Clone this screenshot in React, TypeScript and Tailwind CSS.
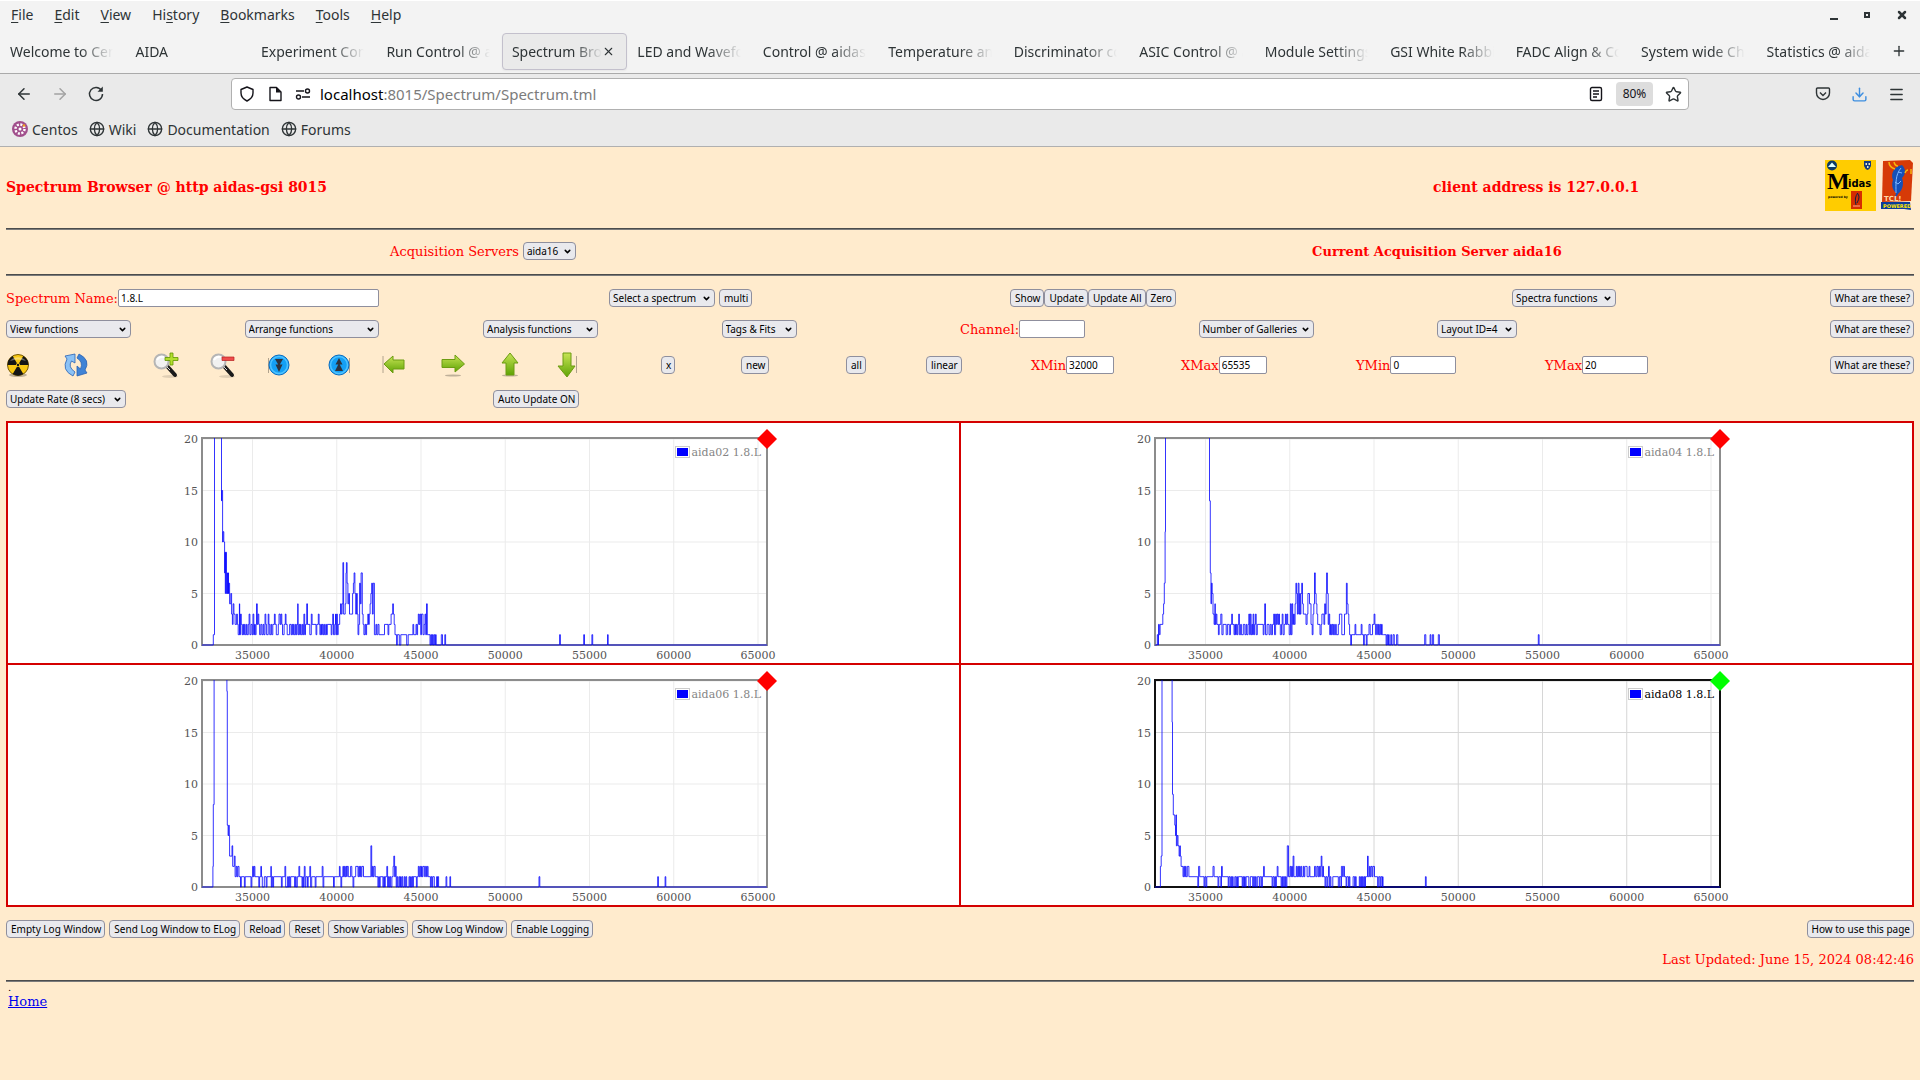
import type { ReactNode } from "react";
import { ArrowLeft, ArrowRight, ChevronDown, Download, Globe, Menu, Plus, Star, X } from "lucide-react";

type Spectrum = {
  name: string;
  active?: boolean;
  // first position of the axis, in the same units as the samples
  start: number;
  // "position:counts" pairs, each level lasts until the next position
  samples: string;
};

const menus = [
  ["", "F", "ile"],
  ["", "E", "dit"],
  ["", "V", "iew"],
  ["Hi", "s", "tory"],
  ["", "B", "ookmarks"],
  ["", "T", "ools"],
  ["", "H", "elp"],
];

const tabs = [
  "Welcome to CentOS",
  "AIDA",
  "Experiment Control",
  "Run Control @ aidas",
  "Spectrum Browser",
  "LED and Waveform",
  "Control @ aidas-gsi",
  "Temperature and status",
  "Discriminator control",
  "ASIC Control @ aidas",
  "Module Settings @",
  "GSI White Rabbit",
  "FADC Align & Control",
  "System wide Checks",
  "Statistics @ aidas-gsi",
];

const spectra: Spectrum[] = [
  {
    name: "aida02 1.8.L",
    start: 59,
    samples:
      "59:0 88:1 91:30 109:14 110:15 112:10 113:11 115:10 117:7 118:9 119:5 120:9 122:5 124:7 125:5 126:7 127:5 128:6 130:4 133:5 135:3 137:2 139:4 141:3 144:2 148:3 150:2 152:1 154:1 155:4 156:1 158:3 160:2 162:1 164:2 166:1 168:2 170:1 173:2 175:1 178:2 180:3 182:1 185:2 188:1 190:3 192:1 194:2 196:1 198:2 199:4 201:2 203:3 205:2 207:1 210:2 213:1 216:2 218:1 221:3 223:2 225:1 229:3 231:2 233:1 236:2 238:1 241:2 245:3 247:2 250:1 255:2 257:3 260:2 262:3 264:2 266:1 270:2 273:3 275:2 278:1 284:2 288:1 290:2 292:1 294:2 296:1 299:2 301:1 303:2 305:4 306:1 308:2 310:1 312:2 314:1 317:2 319:1 321:3 323:1 325:2 328:4 330:2 336:1 340:3 342:2 352:1 354:2 358:3 360:2 362:1 364:2 366:1 368:2 370:1 372:2 374:1 377:2 379:1 381:2 391:1 393:2 395:3 397:1 400:2 402:3 403:1 405:3 407:1 409:2 413:3 415:4 417:3 419:4 421:8 423:3 427:4 429:7 430:8 432:6 434:4 436:5 438:3 440:3 446:5 448:6 450:7 452:5 454:3 456:5 458:3 460:1 462:2 464:6 466:4 468:7 471:3 473:2 475:1 478:2 480:1 482:2 485:3 487:2 489:3 491:4 493:5 495:6 497:3 499:6 502:1 506:2 508:1 511:2 514:1 528:2 537:1 539:2 545:3 549:4 551:3 553:2 555:1 559:0 561:1 566:0 570:1 585:0 589:1 601:2 603:1 609:2 611:1 613:2 615:3 617:2 619:3 621:1 623:3 625:3 627:1 630:2 632:3 634:1 636:4 638:1 645:0 647:1 649:0 651:1 653:0 655:1 657:0 659:1 661:0 674:1 677:0 683:1 685:0 978:1 980:0 1040:1 1042:0 1061:1 1063:0 1101:1 1103:0",
  },
  {
    name: "aida04 1.8.L",
    start: 65,
    samples:
      "65:0 71:1 73:0 74:2 76:1 78:2 85:3 87:4 89:6 91:11 92:30 205:14 207:7 209:4 210:6 212:5 214:3 217:2 219:4 220:2 222:3 224:2 228:1 230:2 234:3 237:1 240:2 248:1 251:2 256:1 259:2 262:3 264:2 268:1 270:2 272:1 274:2 276:1 278:2 280:3 282:1 285:2 287:1 292:2 296:1 299:2 301:1 304:2 306:3 308:1 310:3 312:1 314:2 316:1 317:3 319:1 321:2 323:3 325:1 328:2 343:1 345:2 347:4 349:1 353:2 358:1 361:2 364:1 367:2 370:3 372:1 375:3 377:2 379:3 381:2 383:3 385:2 387:1 390:2 392:3 394:1 397:2 400:3 402:2 404:3 406:2 410:1 413:4 415:1 417:4 419:2 421:3 423:2 425:4 427:6 429:5 431:3 433:6 435:3 437:5 438:3 440:5 442:6 444:4 446:3 453:2 456:3 458:5 462:4 466:2 469:1 471:3 473:4 475:7 477:5 479:4 481:3 483:2 489:1 492:2 494:3 499:2 501:4 503:3 505:5 506:7 508:5 510:2 512:3 514:1 516:2 518:1 520:2 522:1 524:2 526:1 529:2 531:1 536:2 539:3 545:1 552:3 555:3 557:6 559:4 561:3 563:2 565:1 568:0 570:1 579:2 581:1 595:2 597:1 601:0 603:1 608:0 610:1 615:2 618:1 624:2 628:3 630:2 632:1 634:2 637:1 639:2 641:1 643:2 645:1 647:2 649:1 652:1 659:0 661:1 663:0 665:1 667:0 671:1 673:0 677:1 680:0 686:1 689:0 758:1 761:0 772:1 774:0 778:1 781:0 793:1 796:0 1050:1 1052:0",
  },
  {
    name: "aida06 1.8.L",
    start: 59,
    samples:
      "59:0 87:2 88:8 90:30 123:19 124:6 126:5 128:6 129:5 130:3 136:4 138:2 142:3 144:1 147:2 149:1 151:2 154:1 158:0 160:1 168:0 170:1 185:0 187:1 189:2 191:1 193:2 195:1 205:0 207:1 210:2 212:1 214:0 219:1 224:0 226:1 236:2 237:0 239:1 241:0 243:1 263:0 265:1 272:2 274:0 279:1 281:0 283:1 285:0 287:1 297:0 299:1 301:0 304:1 308:2 310:1 316:0 318:1 319:0 321:1 322:2 324:0 326:1 330:0 332:1 336:2 338:0 341:1 350:0 352:1 368:2 370:0 372:1 397:0 399:1 412:2 414:1 416:0 418:1 421:2 423:1 425:2 427:1 429:2 431:1 432:2 435:1 441:2 444:1 447:0 449:1 454:2 460:1 462:2 464:1 466:2 468:1 470:2 474:1 493:4 495:1 497:2 499:1 501:2 504:1 511:0 513:1 515:0 517:1 524:0 526:1 528:0 530:1 534:2 536:0 538:1 540:0 542:1 544:0 547:1 550:2 552:3 554:1 556:2 558:0 560:1 562:0 565:1 567:0 569:1 571:0 573:1 575:0 579:1 581:0 583:1 585:0 591:1 593:0 595:1 597:0 599:1 601:0 602:1 610:0 612:1 615:2 617:1 619:2 621:1 623:2 625:1 627:2 631:1 633:2 636:1 638:2 640:1 646:0 648:1 650:0 652:1 656:0 662:1 664:0 665:1 667:0 686:1 688:0 696:1 698:0 925:1 927:0 1230:1 1232:0 1249:1 1251:0",
  },
  {
    name: "aida08 1.8.L",
    active: true,
    start: 65,
    samples:
      "65:0 79:2 81:3 83:30 109:16 110:9 112:7 116:6 118:5 119:7 120:4 122:5 124:4 127:3 129:4 130:3 132:2 137:1 139:2 141:1 143:2 145:1 148:2 152:1 175:0 177:2 180:1 191:0 193:1 196:0 198:1 214:2 217:1 227:0 229:1 234:0 236:2 238:1 253:0 255:1 258:0 260:1 262:0 264:1 266:0 270:1 273:0 275:1 277:0 279:1 289:0 291:1 293:0 295:1 297:0 299:1 306:0 310:1 316:0 318:1 321:0 323:1 325:0 328:1 333:0 335:1 339:0 341:1 344:2 346:1 366:0 368:1 371:0 373:1 375:0 377:1 379:2 381:1 389:0 391:1 393:0 395:1 398:0 400:1 402:0 404:1 405:4 408:1 412:2 414:1 416:2 418:1 420:3 422:1 428:2 430:1 432:2 434:1 436:2 438:1 440:2 442:1 446:2 448:1 450:2 452:2 456:1 461:2 463:1 475:2 478:1 481:2 484:1 486:2 488:1 490:2 492:3 494:1 496:2 498:1 502:0 504:1 507:0 509:1 511:2 513:0 515:1 517:0 522:1 536:0 539:1 543:0 544:2 547:1 549:2 552:1 556:0 558:1 562:0 564:1 566:0 574:1 578:0 580:1 582:0 590:1 592:0 594:1 596:0 598:1 600:0 602:1 604:0 606:1 609:1 611:3 613:1 616:2 618:1 620:2 623:1 625:2 629:1 637:0 640:1 643:0 645:1 648:0 650:1 651:0 760:1 762:0",
  },
];

const PLOT_LEFT = 19;
const PLOT_WIDTH = 565;
const PLOT_BOTTOM = 222;
const PLOT_TOP = 15;

const levelToY = (level: number) => PLOT_BOTTOM - (level * (PLOT_BOTTOM - PLOT_TOP - 1)) / 20;
const channelToX = (channel: number) => PLOT_LEFT + ((channel - 32000) / 33535) * PLOT_WIDTH;

function tracePath(spectrum: Spectrum) {
  const points = spectrum.samples.split(" ").map((pair) => pair.split(":").map(Number));
  let path = "";
  points.forEach(([position, level], i) => {
    const x = (PLOT_LEFT + ((position - spectrum.start) * PLOT_WIDTH) / 1452).toFixed(1);
    const y = levelToY(level).toFixed(1);
    path += i === 0 ? `M${x} ${y}` : `H${x}V${y}`;
  });
  return path + `H${PLOT_LEFT + PLOT_WIDTH}`;
}

function Button({ children }: { children: ReactNode }) {
  return (
    <button
      type="button"
      className="h-[18px] shrink-0 whitespace-nowrap rounded border border-[#8f8f9d] bg-[#e9e9ed] pl-1 pr-[3px] text-[10px] leading-4 text-black"
    >
      {children}
    </button>
  );
}

function Select({ label, width = "" }: { label: string; width?: string }) {
  return (
    <span className={`relative inline-flex shrink-0 ${width}`}>
      <select
        aria-label={label}
        className="h-[18px] w-full appearance-none rounded border border-[#8f8f9d] bg-[#e9e9ed] pl-[3px] pr-4 text-[10px] leading-4 text-black"
      >
        <option>{label}</option>
      </select>
      <ChevronDown className="pointer-events-none absolute right-1 top-[5px] size-[9px] text-black" strokeWidth={4} />
    </span>
  );
}

function Field({ id, label, value, width }: { id: string; label: string; value: string; width: string }) {
  return (
    <div className="flex items-center">
      <label htmlFor={id} className="whitespace-nowrap">
        {label}
      </label>
      <input
        id={id}
        defaultValue={value}
        className={`h-[18px] rounded-xs border border-[#8f8f9d] bg-white px-[2px] font-['Noto_Sans',sans-serif] text-[10px] text-black ${width}`}
      />
    </div>
  );
}

function Rule() {
  return <hr className="h-[2px] border-0 border-t border-t-[#4c4c4c] bg-[#7b7b7b]" />;
}

function MidasLogo() {
  return (
    <svg width="51" height="51" viewBox="0 0 51 51">
      <rect width="51" height="51" fill="#fc0" />
      <circle cx="7" cy="5.500" r="5" fill="#0c3a66" />
      <path d="M3 7 7 2.500 11 7z" fill="#dff" />
      <path d="M39 1h7v5q-1 3-3.500 4Q40 9 39 6z" fill="#153a80" />
      <path d="M40.500 3h1.500v2h-1.500zm3 0H45v2h-1.500zM42 6h1.500v2H42z" fill="#e8e8d0" />
      <text x="2" y="29" fontFamily="Liberation Serif, serif" fontWeight="bold" fontSize="24" fill="#000">
        M
      </text>
      <text x="23" y="27" fontFamily="DejaVu Sans, sans-serif" fontWeight="bold" fontSize="10" fill="#000">
        idas
      </text>
      <text x="3" y="38" fontFamily="DejaVu Sans, sans-serif" fontWeight="bold" fontSize="3" fill="#000">
        powered by
      </text>
      <path d="M26 31h11v18H26z" fill="#d62d00" />
      <path d="M33 33q-4 4-2 12M32 33q4 3 0 10" stroke="#124" fill="none" />
      <path d="M28 46h7" stroke="#fa8" />
    </svg>
  );
}

function TclLogo() {
  return (
    <svg width="34" height="51" viewBox="0 0 34 51">
      <path d="M3 1 30 0l3 3-2 38-29 1z" fill="#d63a08" />
      <path d="M1 42h29l1 8-7-1H1z" fill="#0b3c9c" />
      <path d="M22 5c-7 1-12 8-9 15-2 6 0 10 3 13l-2 8 4-7c5-4 6-11 4-16 4-4 4-9 0-13z" fill="#1450b8" />
      <path d="M21 8c-6 7-5 16-5 25M18 12l4 1M15 22l3 2 3-3" stroke="#7db6ff" strokeWidth="1" fill="none" />
      <path d="M9 2q0 5 6 7M14 2q1 4 4 4M28 10q-2 0-3 3M31 9v5" stroke="#f6b40e" strokeWidth="1.500" fill="none" />
      <text x="4" y="41" fontFamily="DejaVu Sans, sans-serif" fontSize="7" fill="#ffd9a8">
        TCL!
      </text>
      <text x="3" y="48" fontFamily="DejaVu Sans, sans-serif" fontWeight="bold" fontSize="5" fill="#ffe600">
        POWERED
      </text>
    </svg>
  );
}

function RadiationIcon() {
  return (
    <svg width="24" height="24" viewBox="0 0 24 24">
      <ellipse cx="12" cy="22" rx="9" ry="2" fill="#000" opacity=".25" />
      <circle cx="12" cy="12" r="10.500" fill="#f9c813" stroke="#7a5b00" />
      <path d="M12 12 1.500 12A10.500 10.500 0 0 1 6.700 3zM12 12 17.300 3A10.500 10.500 0 0 1 22.500 12zM12 12 6.700 21.100A10.500 10.500 0 0 0 17.300 21.100z" fill="#151515" />
      <circle cx="12" cy="12" r="2" fill="#f9c813" />
      <circle cx="12" cy="12" r="1.200" fill="#151515" />
      <path d="M4 8a9 7 0 0 1 16 0Q12 5 4 8z" fill="#fff" opacity=".35" />
    </svg>
  );
}

function RefreshIcon() {
  return (
    <svg width="24" height="24" viewBox="0 0 24 24" stroke="#2a62b4" strokeWidth=".8">
      <path d="M9 23Q-3 17 3 6L1 3l10-2v9L7.500 8q-4 6 3.500 11z" fill="#8cc2f5" />
      <path d="M15 1q12 6 6 16l2 3-10 3v-10l3.500 3q3-7-3.500-11z" fill="#3f83d6" />
    </svg>
  );
}

function ZoomIcon({ plus }: { plus?: boolean }) {
  return (
    <svg width="26" height="26" viewBox="0 0 26 26">
      <ellipse cx="17" cy="24.500" rx="8" ry="1.500" fill="#000" opacity=".12" />
      <path d="M14 14 22 23" stroke="#1a1a1a" strokeWidth="4" strokeLinecap="round" />
      <path d="M14 15 17 18" stroke="#ddd" strokeWidth="1" />
      <circle cx="8.500" cy="9.500" r="7" fill="#f1f1f1" stroke="#b5b5b5" strokeWidth="2" />
      <path d="M4 8q2-4 7-3" stroke="#fff" strokeWidth="2" fill="none" />
      {plus ? (
        <path d="M17 1h3v4.500h5v3h-5V13h-3V8.500h-5v-3h5z" fill="#b4de2e" stroke="#5f9500" strokeWidth=".8" />
      ) : (
        <path d="M12 5h12v3.500H12z" fill="#ee4b4b" stroke="#b82020" strokeWidth=".7" />
      )}
    </svg>
  );
}

function RoundIcon({ up }: { up?: boolean }) {
  return (
    <svg width="24" height="24" viewBox="0 0 24 24">
      <path d={up ? "M22.500 5v15" : "M1.500 5v15"} stroke="#000" opacity=".3" />
      <circle cx="12" cy="12" r="10" fill="#14a0f5" stroke="#0b6cc0" strokeWidth="1" />
      <circle cx="12" cy="12" r="8.500" fill="none" stroke="#4fc3ff" strokeWidth="1.500" />
      {up ? (
        <path d="M12 5l3.500 6.500h-7zM12 10l4 8H8z" fill="#2d3440" />
      ) : (
        <path d="M8 6h8l-4 7zM8.500 11.500h7L12 19z" fill="#2d3440" />
      )}
    </svg>
  );
}

const arrowPaths = {
  left: "M2 12 11 4v4h11v9H11v4z",
  right: "M23.500 12 14 3v4.500H1v8h13V20z",
  up: "M12 1 20 11h-4v12H8V11H4z",
  down: "M12 25 20 14h-4V1H8v13H3z",
};

function ArrowIcon({ direction }: { direction: keyof typeof arrowPaths }) {
  return (
    <svg width="24" height="26" viewBox="0 0 24 26">
      <defs>
        <linearGradient id={`arrow-${direction}`} x1="0" y1="0" x2="0" y2="1">
          <stop offset="0" stopColor="#c7e455" />
          <stop offset="1" stopColor="#5fa305" />
        </linearGradient>
      </defs>
      {(direction === "right" || direction === "up") && (
        <ellipse cx="12" cy="23.500" rx="8" ry="1" fill="#000" opacity=".25" />
      )}
      {direction === "left" && <path d="M1 4v17" stroke="#000" opacity=".3" />}
      {direction === "down" && <path d="M21.500 4v17" stroke="#000" opacity=".3" />}
      <path d={arrowPaths[direction]} fill={`url(#arrow-${direction})`} stroke="#6c9c12" strokeWidth="1" />
    </svg>
  );
}

function Plot({ spectrum }: { spectrum: Spectrum }) {
  const frame = spectrum.active ? "#111" : "#8c8c8c";
  const grid = spectrum.active ? "#d6d6d6" : "#ebebeb";
  return (
    <svg width="601" height="240" viewBox="0 0 601 240" fontFamily="DejaVu Serif, serif" fontSize="11" fill="#545454">
      <defs>
        <clipPath id="plot-area">
          <rect x={PLOT_LEFT} y={PLOT_TOP} width={PLOT_WIDTH} height="208" />
        </clipPath>
      </defs>
      {[35000, 40000, 45000, 50000, 55000, 60000, 65000].map((channel) => (
        <g key={channel}>
          <path d={`M${channelToX(channel)} ${PLOT_TOP}V${PLOT_BOTTOM}`} stroke={grid} />
          <text x={channelToX(channel)} y="236" textAnchor="middle">
            {channel}
          </text>
        </g>
      ))}
      {[0, 5, 10, 15, 20].map((level) => (
        <g key={level}>
          <path d={`M${PLOT_LEFT} ${levelToY(level)}H${PLOT_LEFT + PLOT_WIDTH}`} stroke={grid} />
          <text x="15" y={levelToY(level) + 4} textAnchor="end">
            {level}
          </text>
        </g>
      ))}
      <rect x={PLOT_LEFT} y={PLOT_TOP} width={PLOT_WIDTH} height={PLOT_BOTTOM - PLOT_TOP} fill="none" stroke={frame} strokeWidth="2" />
      <path d={tracePath(spectrum)} fill="none" stroke="#00f" strokeWidth=".8" clipPath="url(#plot-area)" />
      <rect x="492.500" y="23.500" width="14" height="11" fill="#fff" stroke="#ccc" />
      <path d="M494 25h11v8h-11z" fill="#00f" />
      <text x="578" y="33" textAnchor="end" fill={spectrum.active ? "#000" : "#858585"}>
        {spectrum.name}
      </text>
      <path d="M584 6 594 16 584 26 574 16z" fill={spectrum.active ? "#0f0" : "#f00"} />
    </svg>
  );
}

function BrowserChrome() {
  return (
    <div className="border-b border-[#b0b0b0] bg-[#eaeaea] font-['Noto_Sans',sans-serif] text-[14px] text-[#2e3436]">
      <div className="border-b border-[#aaaaaa] bg-[#f3f3f3]">
        <nav className="flex h-[29px] items-center justify-between border-t border-white pl-[11px] pr-3">
          <div className="flex items-center gap-[21px]">
            {menus.map(([before, key, after]) => (
              <button key={key + after} type="button" className="leading-5">
                {before}
                <span className="underline underline-offset-2">{key}</span>
                {after}
              </button>
            ))}
          </div>
          <div className="flex items-center gap-[26px]">
            <button type="button" aria-label="Minimize" className="mt-[7px] h-[2px] w-2 bg-[#2e3436]" />
            <button type="button" aria-label="Maximize" className="size-[6px] border-2 border-[#2e3436]" />
            <button type="button" aria-label="Close window">
              <X className="size-3" strokeWidth={5} />
            </button>
          </div>
        </nav>
        <div className="flex h-11 items-center pr-1">
          <div className="flex min-w-0 flex-1">
            {tabs.map((tab) => {
              const selected = tab === "Spectrum Browser";
              return (
                <button
                  key={tab}
                  type="button"
                  className={
                    selected
                      ? "flex h-[37px] min-w-0 flex-1 items-center rounded border border-[#c3c0cc] bg-[#eaeaea] pl-[9px] pr-[11px] shadow-xs"
                      : "flex h-[37px] min-w-0 flex-1 items-center pl-[10px] pr-3"
                  }
                >
                  <span className="min-w-0 flex-1 overflow-hidden whitespace-nowrap text-left [mask-image:linear-gradient(to_right,black_68%,transparent)]">
                    {tab}
                  </span>
                  {selected && <X className="size-[13px]" strokeWidth={2} />}
                </button>
              );
            })}
          </div>
          <button type="button" aria-label="New tab" className="flex w-[34px] justify-center">
            <Plus className="size-4" strokeWidth={2} />
          </button>
        </div>
      </div>

      <div className="flex h-10 items-center pr-[15px]">
        <div className="flex w-[231px] items-center gap-[18px] pl-[15px]">
          <ArrowLeft className="size-[18px]" strokeWidth={2} />
          <ArrowRight className="size-[18px] text-[#a3a3a3]" strokeWidth={2} />
          <svg className="size-[18px]" viewBox="0 0 18 18" fill="none" stroke="currentColor" strokeWidth="1.500">
            <path d="M14.500 5.500A6.500 6.500 0 1 0 15.500 9" />
            <path d="M15.800 1.500v5.300h-5.300z" fill="currentColor" stroke="none" />
          </svg>
        </div>
        <div className="flex h-8 flex-1 items-center rounded border border-[#b0b0b0] bg-white pl-[7px] pr-[6px]">
          <svg className="mr-3 size-4 text-[#15141a]" viewBox="0 0 16 16" fill="none" stroke="currentColor" strokeWidth="1.400">
            <path d="M8 1 14 3.500V7q0 5-6 8-6-3-6-8V3.500z" strokeLinejoin="round" />
          </svg>
          <svg className="mr-3 size-4 text-[#15141a]" viewBox="0 0 16 16" fill="none" stroke="currentColor" strokeWidth="1.400">
            <path d="M3 1.500h6.500L14 6v8.500H3z" strokeLinejoin="round" />
            <path d="M9 1v5.500h5z" fill="currentColor" stroke="none" />
          </svg>
          <svg className="mr-[9px] size-4 text-[#15141a]" viewBox="0 0 16 16" fill="none" stroke="currentColor" strokeWidth="1.400">
            <path d="M1 5h8M7 11h8" />
            <circle cx="12.500" cy="5" r="2" />
            <circle cx="3.500" cy="11" r="2" />
          </svg>
          <label htmlFor="address" className="text-[15px] leading-5 text-black">
            localhost
          </label>
          <input
            id="address"
            defaultValue=":8015/Spectrum/Spectrum.tml"
            className="h-5 min-w-0 flex-1 bg-transparent text-[15px] leading-5 text-[#7c7c7c] outline-none"
          />
          <svg className="mr-3 size-4 text-[#15141a]" viewBox="0 0 16 16" fill="none" stroke="currentColor" strokeWidth="1.400">
            <rect x="2.500" y="1.500" width="11" height="13" rx="1.500" />
            <path d="M5 5h6M5 8h6M5 11h4" />
          </svg>
          <button type="button" className="mr-3 h-6 w-[37px] rounded bg-[#dddddd] text-[12px] leading-6 text-[#15141a]">
            80%
          </button>
          <Star className="size-[17px]" strokeWidth={2} />
        </div>
        <div className="flex w-[216px] items-center justify-end gap-[20px]">
          <svg className="size-4" viewBox="0 0 16 16" fill="none" stroke="currentColor" strokeWidth="1.400">
            <path d="M2.500 2h11q1 0 1 1v4a6.500 6.500 0 0 1-13 0V3q0-1 1-1z" />
            <path d="m5 6.500 3 3 3-3" />
          </svg>
          <Download className="size-[17px] text-[#3d8ee0]" strokeWidth={2} />
          <Menu className="size-[17px]" strokeWidth={2} />
        </div>
      </div>

      <div className="flex h-8 items-center gap-[11px] pb-[2px] pl-3">
        <a href="#centos" className="flex items-center gap-1">
          <svg className="size-4" viewBox="0 0 16 16">
            <circle cx="8" cy="8" r="8" fill="#a14f8c" />
            <circle cx="8" cy="8" r="4.500" fill="none" stroke="#fff" strokeWidth="2.500" strokeDasharray="2 1.500" />
            <circle cx="8" cy="8" r="1.500" fill="#fff" />
            <circle cx="12" cy="4.500" r="1.300" fill="#f0a020" />
          </svg>
          Centos
        </a>
        {["Wiki", "Documentation", "Forums"].map((name) => (
          <a key={name} href={`#${name.toLowerCase()}`} className="flex items-center gap-1">
            <Globe className="size-4" strokeWidth={2} />
            {name}
          </a>
        ))}
      </div>
    </div>
  );
}

export default function App() {
  return (
    <div className="min-h-screen bg-[#ffebcd]">
      <BrowserChrome />

      <main className="px-[6px] font-['DejaVu_Serif',serif] text-[13px] leading-[15px] text-[#ff0000] [&_button]:font-['Noto_Sans',sans-serif] [&_select]:font-['Noto_Sans',sans-serif]">
        <header className="grid h-[81px] grid-cols-[1427fr_481fr] items-center text-[14px] font-bold">
          <h1>Spectrum Browser @ http aidas-gsi 8015</h1>
          <div className="flex items-center justify-between">
            <h2>client address is 127.0.0.1</h2>
            <div className="flex gap-1 pb-1">
              <MidasLogo />
              <TclLogo />
            </div>
          </div>
        </header>
        <Rule />
        <div className="grid h-11 grid-cols-2 items-center pb-[2px]">
          <div className="flex items-center justify-center gap-1">
            <span>Acquisition Servers</span>
            <Select label="aida16" width="w-[53px]" />
          </div>
          <h2 className="text-center font-bold">Current Acquisition Server aida16</h2>
        </div>
        <Rule />

        <form className="grid gap-[13px] pt-[13px]" onSubmit={(e) => e.preventDefault()}>
          <div className="grid grid-cols-[603fr_401fr_502fr_402fr] items-center">
            <Field id="spectrum-name" label="Spectrum Name:" value="1.8.L" width="w-[261px]" />
            <div className="flex gap-1">
              <Select label="Select a spectrum" width="w-[106px]" />
              <Button>multi</Button>
            </div>
            <div className="flex">
              <Button>Show</Button>
              <Button>Update</Button>
              <Button>Update All</Button>
              <Button>Zero</Button>
            </div>
            <div className="flex justify-between">
              <Select label="Spectra functions" width="w-[104px]" />
              <Button>What are these?</Button>
            </div>
          </div>

          <div className="grid h-[19px] grid-cols-8 items-start">
            <Select label="View functions" width="w-[125px]" />
            <Select label="Arrange functions" width="w-[134px]" />
            <Select label="Analysis functions" width="w-[115px]" />
            <Select label="Tags & Fits" width="w-[75px]" />
            <Field id="channel" label="Channel:" value="" width="w-[66px]" />
            <Select label="Number of Galleries" width="w-[115px]" />
            <Select label="Layout ID=4" width="w-[80px]" />
            <div className="flex justify-end">
              <Button>What are these?</Button>
            </div>
          </div>

          <div className="grid h-6 grid-cols-[58fr_89fr_57fr_57fr_60fr_55fr_59fr_57fr_57fr_106fr_80fr_105fr_80fr_105fr_150fr_175fr_189fr_369fr] items-center">
            <button type="button" aria-label="Clear">
              <RadiationIcon />
            </button>
            <button type="button" aria-label="Refresh">
              <RefreshIcon />
            </button>
            <button type="button" aria-label="Zoom in">
              <ZoomIcon plus />
            </button>
            <button type="button" aria-label="Zoom out">
              <ZoomIcon />
            </button>
            <button type="button" aria-label="Compress">
              <RoundIcon />
            </button>
            <button type="button" aria-label="Expand">
              <RoundIcon up />
            </button>
            <button type="button" aria-label="Left">
              <ArrowIcon direction="left" />
            </button>
            <button type="button" aria-label="Right">
              <ArrowIcon direction="right" />
            </button>
            <button type="button" aria-label="Up">
              <ArrowIcon direction="up" />
            </button>
            <button type="button" aria-label="Down">
              <ArrowIcon direction="down" />
            </button>
            <div className="flex">
              <Button>x</Button>
            </div>
            <div className="flex">
              <Button>new</Button>
            </div>
            <div className="flex">
              <Button>all</Button>
            </div>
            <div className="flex">
              <Button>linear</Button>
            </div>
            <Field id="xmin" label="XMin" value="32000" width="w-12" />
            <Field id="xmax" label="XMax" value="65535" width="w-12" />
            <Field id="ymin" label="YMin" value="0" width="w-[66px]" />
            <div className="flex justify-between">
              <Field id="ymax" label="YMax" value="20" width="w-[66px]" />
              <Button>What are these?</Button>
            </div>
          </div>

          <div className="grid h-5 grid-cols-[487fr_1421fr] items-center">
            <Select label="Update Rate (8 secs)" width="w-[120px]" />
            <div className="flex">
              <Button>Auto Update ON</Button>
            </div>
          </div>
        </form>

        <section className="mt-3 grid grid-cols-2 gap-[2px] border-2 border-[#d40000] bg-[#d40000]">
          {spectra.map((spectrum) => (
            <div key={spectrum.name} className="flex justify-center bg-white">
              <Plot spectrum={spectrum} />
            </div>
          ))}
        </section>

        <footer>
          <div className="mt-[13px] flex h-[19px] items-start gap-1">
            <Button>Empty Log Window</Button>
            <Button>Send Log Window to ELog</Button>
            <Button>Reload</Button>
            <Button>Reset</Button>
            <Button>Show Variables</Button>
            <Button>Show Log Window</Button>
            <Button>Enable Logging</Button>
            <div className="ml-auto flex">
              <Button>How to use this page</Button>
            </div>
          </div>
          <p className="mb-[11px] mt-3 text-right leading-[18px]">Last Updated: June 15, 2024 08:42:46</p>
          <Rule />
          <div className="pl-[2px] text-black">
            <p className="text-[10px] leading-3">.</p>
            <a href="#home" className="text-[#0000ee] underline">
              Home
            </a>
          </div>
        </footer>
      </main>
    </div>
  );
}
